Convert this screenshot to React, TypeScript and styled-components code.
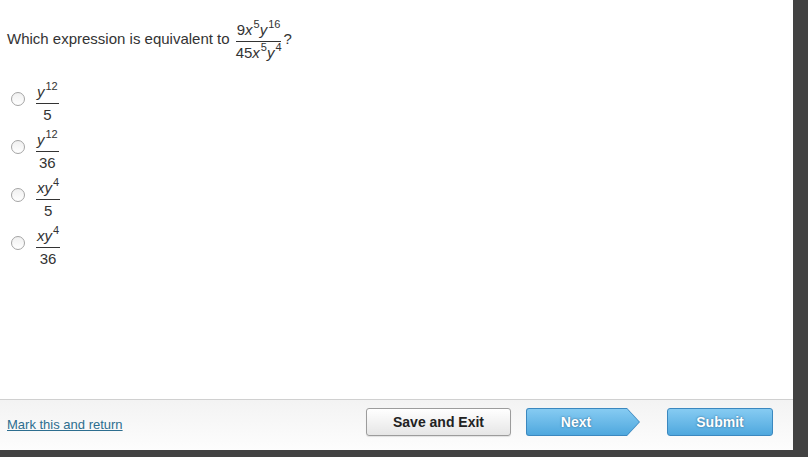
import * as React from 'react';
import styled, { createGlobalStyle } from 'styled-components';

const GlobalStyle = createGlobalStyle`
  html, body {
    margin: 0;
    padding: 0;
    background: #424242;
  }
  body {
    font-family: "Liberation Sans", Arial, sans-serif;
  }
`;

const Frame = styled.div({
  width: 808,
  height: 457,
  display: 'grid',
  gridTemplateColumns: '793px 15px',
  gridTemplateRows: '450px 7px',
  background: '#424242',
});

const Panel = styled.div({
  background: '#fff',
  display: 'flex',
  flexDirection: 'column',
});

const Body = styled.div({
  flex: 1,
  padding: '13px 7px 0',
  color: '#333',
});

const Question = styled.div({
  display: 'flex',
  alignItems: 'center',
  fontSize: 15,
  height: 50,
});

const Fraction = styled.span<{ $gap: number }>`
  display: inline-flex;
  flex-direction: column;
  align-items: center;
  font-size: 15px;
  line-height: 1;
  margin-left: ${({ $gap }) => $gap}px;
  margin-right: 1px;
`;

const Numerator = styled.span({
  padding: '6px 1px 4px',
  borderBottom: '1px solid #333',
  whiteSpace: 'nowrap',
});

const Denominator = styled.span({
  padding: '3px 1px 0',
  whiteSpace: 'nowrap',
});

const Var = styled.i({
  fontStyle: 'italic',
});

const Sup = styled.sup({
  fontSize: 11,
  lineHeight: 0,
  verticalAlign: 7,
  marginLeft: 1,
});

const Options = styled.div({
  marginTop: 13,
  display: 'flex',
  flexDirection: 'column',
});

const Option = styled.label({
  display: 'flex',
  alignItems: 'center',
  height: 48,
});

const Radio = styled.span({
  width: 12,
  height: 12,
  borderRadius: '50%',
  border: '1px solid #a4a4a4',
  background: 'linear-gradient(#f0f0f0, #fff)',
  marginLeft: 4,
  marginRight: 11,
  marginBottom: 3,
  flexShrink: 0,
});

const Footer = styled.div({
  height: 51,
  borderTop: '1px solid #d0d0d0',
  background: 'linear-gradient(#f3f3f3, #fdfdfd)',
  display: 'flex',
  alignItems: 'flex-start',
  justifyContent: 'space-between',
  padding: '8px 20px 0 7px',
  boxSizing: 'border-box',
});

const MarkLink = styled.a({
  color: '#2d6e8f',
  fontSize: 13,
  textDecoration: 'underline',
  marginTop: 9,
  cursor: 'pointer',
});

const Buttons = styled.div({
  display: 'flex',
  alignItems: 'center',
});

const GrayButton = styled.button({
  width: 145,
  height: 28,
  border: '1px solid #9c9c9c',
  borderRadius: 3,
  background: 'linear-gradient(#ffffff, #e6e6e6)',
  fontFamily: '"Liberation Sans", Arial, sans-serif',
  fontWeight: 700,
  fontSize: 14,
  color: '#222',
  boxShadow: '0 1px 1px rgba(0,0,0,0.1)',
});

const BlueButton = styled.button<{ $width: number }>`
  width: ${({ $width }) => $width}px;
  height: 28px;
  border: 1px solid #3b88bf;
  border-radius: 3px;
  background: linear-gradient(#86cbf2, #4fa8de);
  font-family: "Liberation Sans", Arial, sans-serif;
  font-weight: 700;
  font-size: 14px;
  color: #fff;
  text-shadow: 0 0 2px rgba(20, 70, 110, 0.8);
  padding: 0;
`;

const ArrowOuter = styled.button({
  width: 114,
  height: 28,
  marginLeft: 15,
  marginRight: 27,
  border: 'none',
  padding: 1,
  background: '#3b88bf',
  clipPath: 'polygon(0 0, 101px 0, 114px 50%, 101px 100%, 0 100%)',
  borderRadius: 3,
  display: 'flex',
});

const ArrowInner = styled.span({
  flex: 1,
  display: 'flex',
  alignItems: 'center',
  justifyContent: 'center',
  paddingRight: 14,
  background: 'linear-gradient(#86cbf2, #4fa8de)',
  clipPath: 'polygon(0 0, 100px 0, 112px 50%, 100px 100%, 0 100%)',
  borderRadius: 2,
  fontFamily: '"Liberation Sans", Arial, sans-serif',
  fontWeight: 700,
  fontSize: 14,
  color: '#fff',
  textShadow: '0 0 2px rgba(20, 70, 110, 0.8)',
});

const Gutter = styled.div({
  background: '#424242',
});

type Answer = { num: React.ReactNode; den: string };

const answers: Answer[] = [
  { num: <><Var>y</Var><Sup>12</Sup></>, den: '5' },
  { num: <><Var>y</Var><Sup>12</Sup></>, den: '36' },
  { num: <><Var>xy</Var><Sup>4</Sup></>, den: '5' },
  { num: <><Var>xy</Var><Sup>4</Sup></>, den: '36' },
];

export default function App(): React.ReactElement {
  return (
    <>
      <GlobalStyle />
      <Frame>
        <Panel>
          <Body>
            <Question>
              Which expression is equivalent to
              <Fraction $gap={5}>
                <Numerator>
                  9<Var>x</Var><Sup>5</Sup><Var>y</Var><Sup>16</Sup>
                </Numerator>
                <Denominator>
                  45<Var>x</Var><Sup>5</Sup><Var>y</Var><Sup>4</Sup>
                </Denominator>
              </Fraction>
              ?
            </Question>

            <Options>
              {answers.map((a, i) => (
                <Option key={i}>
                  <Radio />
                  <Fraction $gap={0}>
                    <Numerator>{a.num}</Numerator>
                    <Denominator>{a.den}</Denominator>
                  </Fraction>
                </Option>
              ))}
            </Options>
          </Body>

          <Footer>
            <MarkLink>Mark this and return</MarkLink>
            <Buttons>
              <GrayButton>Save and Exit</GrayButton>
              <ArrowOuter>
                <ArrowInner>Next</ArrowInner>
              </ArrowOuter>
              <BlueButton $width={106}>Submit</BlueButton>
            </Buttons>
          </Footer>
        </Panel>
        <Gutter />
        <Gutter />
        <Gutter />
      </Frame>
    </>
  );
}
